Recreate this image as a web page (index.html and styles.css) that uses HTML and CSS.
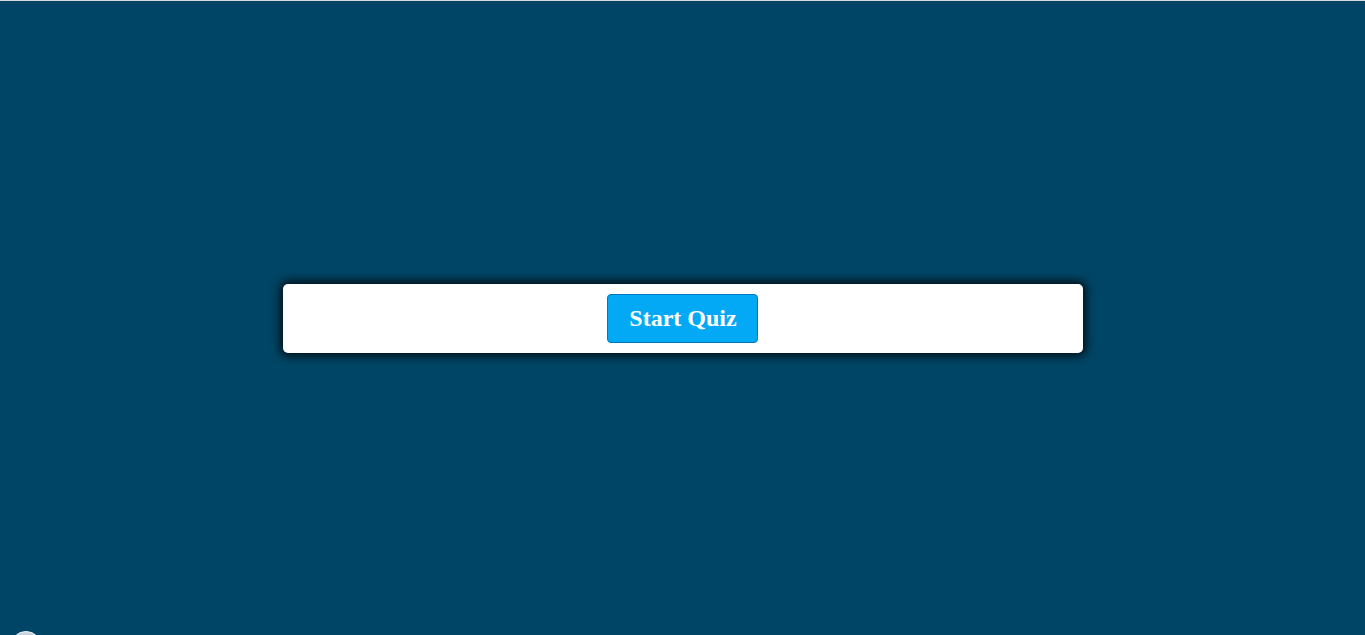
FILE: index.html
```html
<!DOCTYPE html>
<html>
<head>
<meta charset="utf-8">
<link rel="stylesheet" href="styles.css">
</head>
<body>
<div class="page">
  <div class="card">
    <button class="start-btn">Start Quiz</button>
  </div>
</div>
<div class="fab"></div>
</body>
</html>
```
FILE: styles.css
```css
html, body {
  margin: 0;
  padding: 0;
  height: 100%;
}
body {
  background: #004565;
  font-family: "Liberation Serif", "Times New Roman", serif;
  overflow: hidden;
}
.page {
  box-sizing: border-box;
  height: 100vh;
  border-top: 1px solid #d8d8d8;
  display: flex;
  align-items: center;
  justify-content: center;
}
.card {
  width: 800px;
  box-sizing: border-box;
  background: #fff;
  border-radius: 5px;
  padding: 10px 0 10px;
  display: flex;
  justify-content: center;
  box-shadow: 0 0 10px 3px rgba(0, 0, 0, 0.8);
}
.start-btn {
  font-family: "Liberation Serif", "Times New Roman", serif;
  font-weight: bold;
  font-size: 24px;
  color: #fff;
  background: #03a9f4;
  border: 1px solid #0277bd;
  border-radius: 4px;
  padding: 10px 20px 10px 21px;
  line-height: 27px;
  cursor: pointer;
}
.fab {
  position: fixed;
  left: 10px;
  top: 631px;
  width: 32px;
  height: 32px;
  border-radius: 50%;
  background: #c9d3df;
  border: 1px solid #eef2f6;
  box-sizing: border-box;
}
```
